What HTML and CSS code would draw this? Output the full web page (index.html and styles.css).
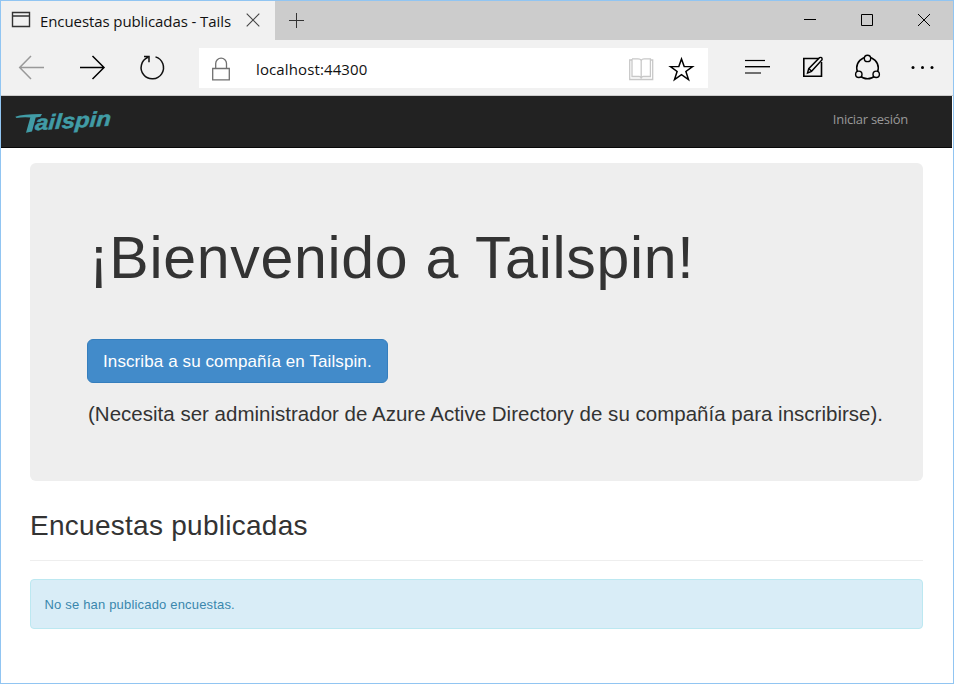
FILE: index.html
```html
<!DOCTYPE html>
<html lang="es">
<head>
<meta charset="utf-8">
<title>Encuestas publicadas - Tailspin</title>
<link rel="stylesheet" href="styles.css">
</head>
<body>
<div class="window">
  <header class="titlebar">
    <div class="tab">
      <svg class="tab-icon" width="20" height="18" viewBox="0 0 20 18" fill="none" stroke="#333"><path d="M1.500 2.500h17v14h-17zM1.500 6h17" stroke-width="1.400"/></svg>
      <span class="tab-title">Encuestas publicadas - Tails</span>
      <svg class="tab-close" width="14" height="14" viewBox="0 0 14 14" stroke="#444" stroke-width="1.1"><path d="M.7.7l12.600 12.600M13.300.7L.7 13.300"/></svg>
    </div>
    <svg class="tab-new" width="16" height="16" viewBox="0 0 16 16" stroke="#333"><path d="M7.500 0v15M0 7.500h15"/></svg>
    <svg class="controls" width="128" height="16" viewBox="0 0 128 16" fill="none" stroke="#000"><path d="M1 7.500h12M58.500 2.500h11v11h-11zM115 2l12 12M127 2l-12 12"/></svg>
  </header>
  <div class="toolbar">
    <svg class="nav" width="150" height="30" viewBox="0 0 150 30" fill="none" stroke-width="1.500">
      <path d="M26 15.500H2M13 4L1.700 15.500 13 27" stroke="#999"/>
      <path d="M62 15.500h24M74.500 4L86 15.500 74.500 27" stroke="#000"/>
      <path d="M137.500 4.900A11.200 11.200 0 1 1 130 5.300M126 4.600h5v5.600" stroke="#111"/>
    </svg>
    <div class="address">
      <svg class="lock" width="20" height="26" viewBox="0 0 20 26" fill="none" stroke="#707070" stroke-width="1.300"><path d="M1.700 12.500h16.600v11.300H1.700zM4.700 12.500V7.500a5.400 5.400 0 0 1 10.800 0v5"/></svg>
      <span class="url">localhost:44300</span>
      <svg class="marks" width="68" height="28" viewBox="0 0 68 28" fill="none">
        <path d="M4 5H1.700v19.500h23V5H22.500M4 4v17.500h7q2 0 2.200 2 .2-2 2.200-2h7V3.800h-6q-3 0-3.200 2-.2-2-3.200-2H4M13.200 5.500v18" stroke="#c8c8c8" stroke-width="1.300"/>
        <path d="M53.500 4l2.700 7.500 8.300.1-6.600 4.900 2.600 8-7-4.900-7 4.900 2.600-8-6.600-4.900 8.300-.1z" stroke="#000" stroke-width="1.500"/>
      </svg>
    </div>
    <svg class="tools" width="192" height="30" viewBox="0 0 192 30" fill="none" stroke="#000">
      <path d="M1 8.500h20" stroke-width="1.200"/><path d="M1 14.700h25" stroke-width="1.400"/><path d="M1 21h16" stroke="#444" stroke-width="1.500"/>
      <path d="M74.500 6.500H59.800v17.700h17.700V10" stroke-width="1.600"/><path d="M63.500 21l1.200-4.300L75.500 5.700q2.800-1.200 2.600 2L67.500 19.300zM65 16.700l2.600 2.600" stroke-width="1.400"/>
      <circle cx="123.500" cy="16" r="10.800" stroke-width="1.500"/><g fill="#f1f1f1" stroke-width="1.400"><circle cx="123.500" cy="6.400" r="3.200"/><circle cx="114.800" cy="22.300" r="3.200"/><circle cx="132.200" cy="22.300" r="3.200"/></g>
      <g fill="#000" stroke="none"><circle cx="169" cy="15.500" r="1.500"/><circle cx="178.500" cy="15.500" r="1.500"/><circle cx="188" cy="15.500" r="1.500"/></g>
    </svg>
  </div>
  <nav class="navbar">
    <svg class="brand" width="110" height="34" viewBox="0 0 110 34" fill="#419ca6" stroke="#419ca6">
      <path stroke="none" d="M.3 8.700Q8 6 27 6.100l-1.500 2.700-4.800.8L17 23.500l-6 1.300 4.300-15.300Q8 9 1.500 9.900z"/>
      <text class="brand-text" transform="rotate(-3.500 19 22) skewX(-7)" x="22.500" y="22.300" textLength="76" lengthAdjust="spacingAndGlyphs">ailspin</text>
    </svg>
    <a class="login">Iniciar sesión</a>
  </nav>
  <main class="page">
    <section class="jumbotron">
      <h1>¡Bienvenido a Tailspin!</h1>
      <a class="button"><span>Inscriba a su compañía en Tailspin.</span></a>
      <p class="note">(Necesita ser administrador de Azure Active Directory de su compañía para inscribirse).</p>
    </section>
    <h2>Encuestas publicadas</h2>
    <div class="alert">No se han publicado encuestas.</div>
  </main>
</div>
</body>
</html>
```
FILE: styles.css
```css
* { box-sizing: border-box; }
body { margin: 0; font-family: "Liberation Sans", Arial, sans-serif; color: #333; }
svg { display: block; flex: none; overflow: visible; }
h1, h2, p { margin: 0; font-weight: 400; white-space: nowrap; }
.window { width: 954px; height: 684px; border: 1px solid #91c5f2; background: #fff; overflow: hidden; }
.titlebar { display: flex; height: 39px; background: #ccc; }
.tab { display: flex; width: 274px; height: 39px; padding-left: 10px; background: #f1f1f1; }
.tab-icon { margin-top: 9px; }
.tab-title { width: 205px; margin-left: 9px; font: 15px/41px "Open Sans", sans-serif; letter-spacing: -.09px; color: #111; white-space: nowrap; }
.tab-close { margin: 12px 0 0 1px; }
.tab-new { margin: 12px 0 0 14px; }
.controls { margin: 11px 22px 0 auto; }
.toolbar { display: flex; height: 56px; padding: 8px 17px 0; background: #f1f1f1; border-bottom: 1px solid #ccc; }
.nav { margin: 4px 31px 0 0; }
.address { display: flex; width: 509px; height: 40px; background: #fff; }
.lock { margin: 8px 0 0 12px; }
.url { margin-left: 25px; font: 15px/42px "Open Sans", sans-serif; letter-spacing: .12px; color: #111; }
.marks { margin: 7px 12px 0 auto; }
.tools { margin: 4px 0 0 36px; }
.navbar { display: flex; justify-content: space-between; width: 951px; height: 52px; padding: 0 44px 0 14px; background: #222; border-bottom: 1px solid #080808; }
.brand { margin-top: 12px; }
.brand-text { font: italic 700 21px "Liberation Sans", sans-serif; stroke-width: .5px; }
.login { font: 13px/47px "Open Sans", sans-serif; letter-spacing: -.28px; color: #999; }
.page { padding: 15px 29px 0; }
.jumbotron { width: 893px; height: 318px; padding: 58px 57px 0; background: #eee; border-radius: 6px; }
h1 { height: 118px; padding-left: 2px; font-size: 59px; line-height: 74px; letter-spacing: .7px; }
.button { display: flex; align-items: center; width: 301px; height: 44px; padding: 2px 0 0 15px; background: #428bca; border: 1px solid #357ebd; border-radius: 6px; color: #fff; font-size: 17px; letter-spacing: .1px; white-space: nowrap; }
.note { margin-top: 16px; padding-left: 1px; font-size: 20.5px; line-height: 30px; letter-spacing: .01px; }
h2 { width: 893px; height: 80px; padding-top: 25px; border-bottom: 1px solid #eee; font-size: 28px; line-height: 39px; letter-spacing: .27px; }
.alert { width: 893px; height: 50px; margin-top: 18px; padding-left: 13.5px; background: #d9edf7; border: 1px solid #bce8f1; border-radius: 4px; color: #3a87ad; font-size: 13px; line-height: 49px; letter-spacing: .18px; }
```
